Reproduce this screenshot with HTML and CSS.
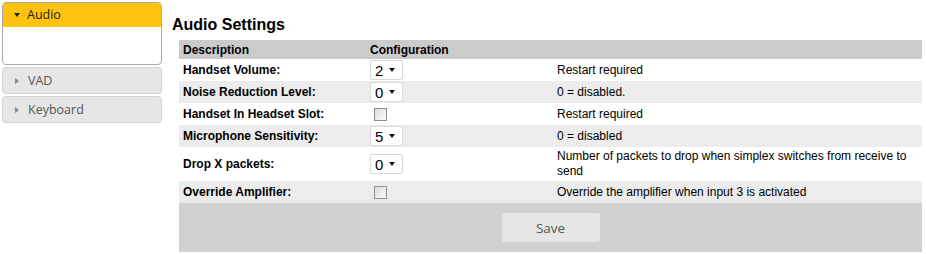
FILE: index.html
```html
<!DOCTYPE html>
<html>
  <head>
    <meta charset="utf-8" />
    <title>Audio Settings</title>
    <link rel="stylesheet" href="styles.css">
  </head>

  <body>
    <div class="layout">
      <nav class="sidebar">
        <div class="panel open">
          <div class="panel-head"><span class="caret"></span>Audio</div>
          <div class="panel-body"></div>
        </div>
        <div class="panel">
          <div class="panel-head"><span class="caret"></span>VAD</div>
        </div>
        <div class="panel">
          <div class="panel-head"><span class="caret"></span>Keyboard</div>
        </div>
      </nav>

      <main class="main">
        <h2>Audio Settings</h2>

        <form class="settings">
          <table>
            <thead>
              <tr>
                <th class="col-desc">Description</th>
                <th class="col-conf">Configuration</th>
                <th></th>
              </tr>
            </thead>
            <tbody>
              <tr>
                <td class="label">Handset Volume:</td>
                <td><span class="picker"><select name="volume"><option>1</option><option selected>2</option><option>3</option></select></span></td>
                <td>Restart required</td>
              </tr>
              <tr class="alt">
                <td class="label">Noise Reduction Level:</td>
                <td><span class="picker"><select name="noise"><option selected>0</option><option>1</option><option>2</option></select></span></td>
                <td>0 = disabled.</td>
              </tr>
              <tr>
                <td class="label">Handset In Headset Slot:</td>
                <td><input type="checkbox" name="slot" /></td>
                <td>Restart required</td>
              </tr>
              <tr class="alt">
                <td class="label">Microphone Sensitivity:</td>
                <td><span class="picker"><select name="mic"><option>4</option><option selected>5</option><option>6</option></select></span></td>
                <td>0 = disabled</td>
              </tr>
              <tr class="tall">
                <td class="label">Drop X packets:</td>
                <td><span class="picker"><select name="drop"><option selected>0</option><option>1</option><option>2</option></select></span></td>
                <td>Number of packets to drop when simplex switches from receive to send</td>
              </tr>
              <tr class="alt">
                <td class="label">Override Amplifier:</td>
                <td><input type="checkbox" name="amp" /></td>
                <td>Override the amplifier when input 3 is activated</td>
              </tr>
            </tbody>
            <tfoot>
              <tr>
                <td colspan="3">
                  <button type="button" class="save">Save</button>
                </td>
              </tr>
            </tfoot>
          </table>
        </form>
      </main>
    </div>
  </body>
</html>
```

FILE: styles.css
```css
html {
  font-family: Arial, "Liberation Sans", Helvetica, sans-serif;
}

body {
  margin: 0;
  padding: 2px;
  color: #000;
}

.layout {
  display: flex;
  align-items: flex-start;
}

/* accordion on the left */
.sidebar {
  width: 160px;
  flex: none;
  font-family: "Open Sans", "DejaVu Sans", sans-serif;
  font-size: 12.5px;
}

.panel {
  border: 1px solid #d3d3d3;
  border-radius: 4px;
  background: #e6e6e6;
  margin-bottom: 2px;
  overflow: hidden;
}
.panel-head {
  height: 25px;
  line-height: 25px;
  padding-left: 10px;
  color: #555;
  display: flex;
  align-items: center;
}
.caret {
  width: 0;
  height: 0;
  border-top: 3.5px solid transparent;
  border-bottom: 3.5px solid transparent;
  border-left: 4px solid #888;
  margin: 0 9px 0 2px;
}

.panel.open {
  border-color: #aaa;
  background: #fff;
}
.panel.open .panel-head {
  background: #ffc20e;
  color: #222;
  height: 24px;
  line-height: 24px;
}
.panel.open .caret {
  border-left: 3.5px solid transparent;
  border-right: 3.5px solid transparent;
  border-top: 4px solid #222;
  border-bottom: 0;
  margin: 0 7px 0 1px;
}
.panel-body {
  height: 37px;
}

/* settings table */
.main {
  flex: 1;
  padding-left: 10px;
}

h2 {
  font-size: 16px;
  line-height: 18px;
  margin: 14px 0 6px;
}

.settings {
  margin-left: 7px;
}

table {
  width: 743px;
  border-collapse: collapse;
  font-size: 12px;
  text-align: left;
}
table th {
  background: #cbcbcb;
  height: 19px;
  padding: 0 4px;
  font-weight: bold;
}
table .col-desc,
table .col-conf {
  width: 179px;
}
table td {
  height: 22px;
  padding: 0 4px;
  line-height: 15px;
}
table tr.tall td {
  height: 34px;
}
table tr.alt td {
  background: #ececec;
}
table td.label {
  font-weight: bold;
}

.picker {
  position: relative;
  display: inline-block;
  vertical-align: middle;
}
.picker select {
  appearance: none;
  -webkit-appearance: none;
  display: block;
  width: 33px;
  height: 20px;
  border: 1px solid #d8d8d8;
  border-radius: 2px;
  background: #fff;
  font: 15px Arial, "Liberation Sans", sans-serif;
  padding: 0 0 0 4px;
  margin: 0;
  color: #000;
  outline: none;
}
.picker::after {
  content: "";
  position: absolute;
  right: 8px;
  top: 8px;
  border-left: 3.5px solid transparent;
  border-right: 3.5px solid transparent;
  border-top: 4px solid #111;
  pointer-events: none;
}

input[type="checkbox"] {
  appearance: none;
  -webkit-appearance: none;
  width: 13px;
  height: 13px;
  margin: 0 0 0 4px;
  border: 1px solid #8f8f8f;
  background: linear-gradient(135deg, #dcdcdc, #fbfbfb);
  vertical-align: middle;
}

tfoot td {
  background: #d2d1d1;
  height: 49px;
  text-align: center;
  padding: 0;
}

.save {
  width: 98px;
  height: 29px;
  border: 0;
  border-radius: 3px;
  background: #e6e6e6;
  color: #555;
  font-family: "Open Sans", "DejaVu Sans", sans-serif;
  font-size: 13.5px;
  cursor: pointer;
}
```
